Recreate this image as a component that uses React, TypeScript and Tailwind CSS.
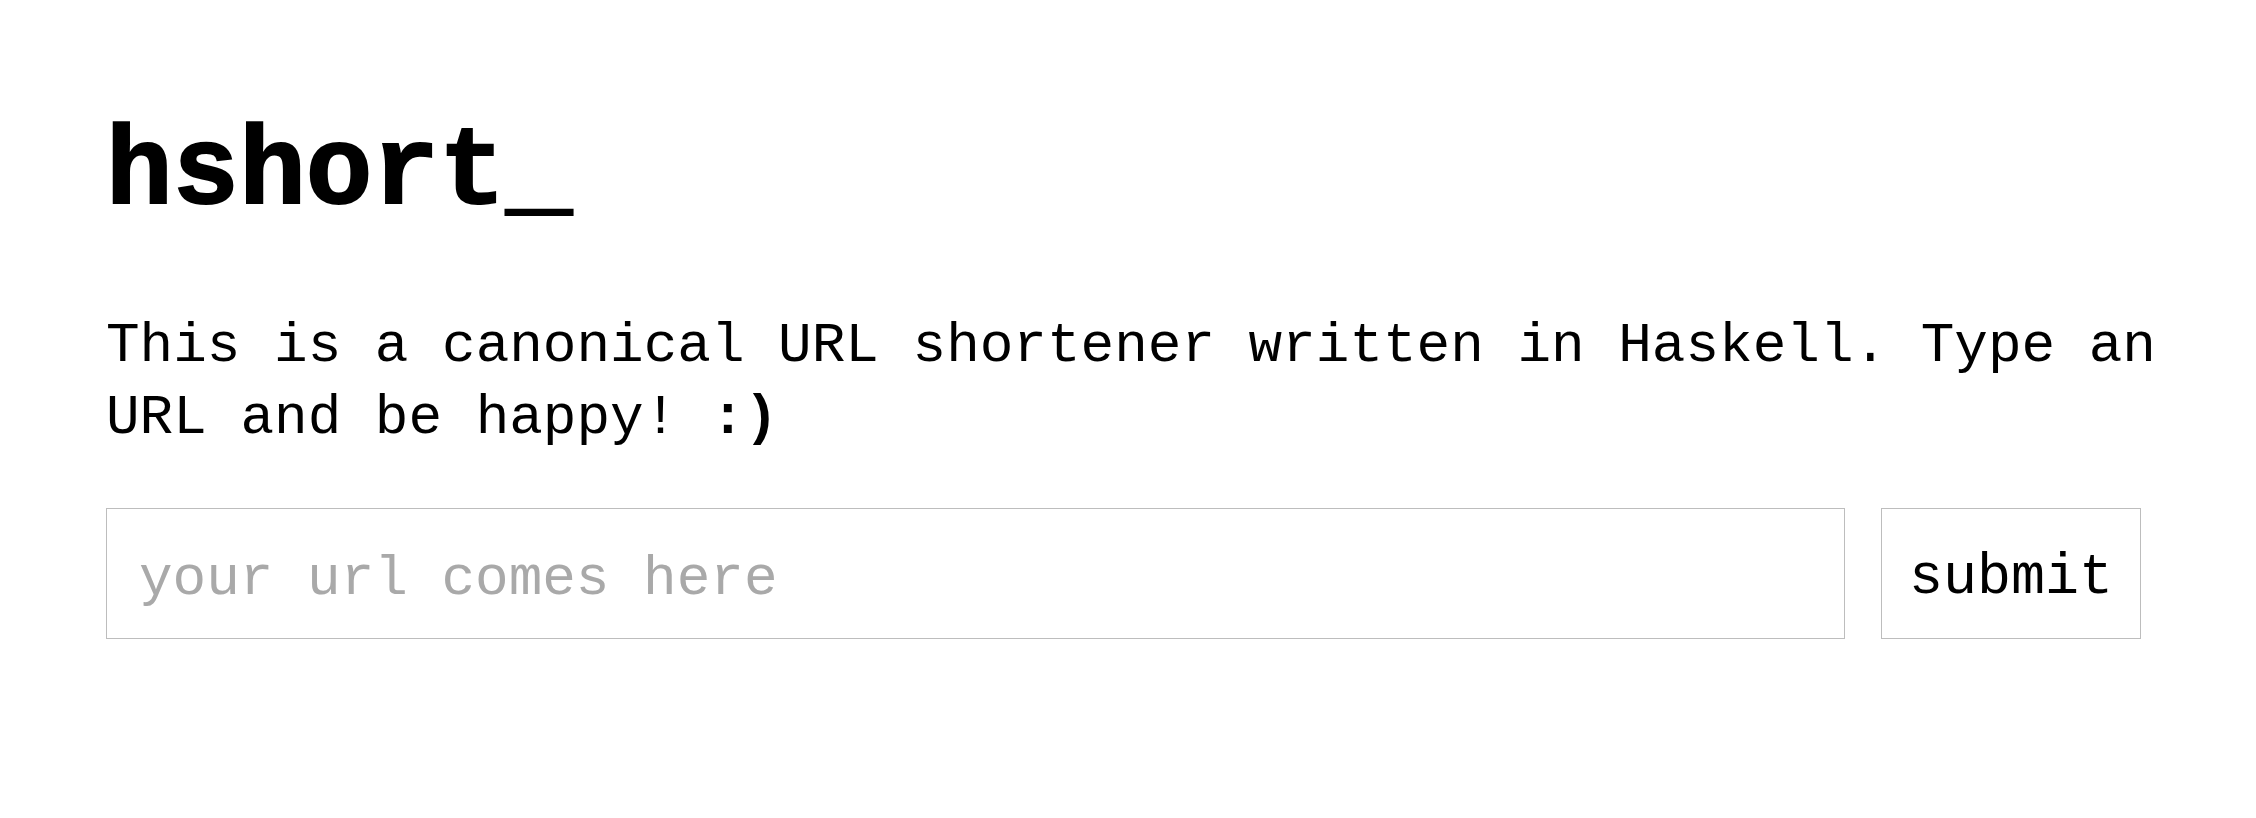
export default function App() {
  return (
    <main className="min-h-screen bg-white px-[106px] pt-[118px] text-black font-['Liberation_Mono','DejaVu_Sans_Mono',monospace]">
      {/* Title */}
      <h1 className="text-[111px] font-bold leading-none [-webkit-text-stroke:2px_black]">
        hshort_
      </h1>

      {/* Description */}
      <p className="mt-[81px] w-[2080px] text-[56px] leading-[72px]">
        This is a canonical URL shortener written in Haskell. Type an URL and be happy! <strong className="font-bold">:)</strong>
      </p>

      {/* Form */}
      <form className="mt-[54px] flex w-[2035px] gap-[36px]" onSubmit={(e) => e.preventDefault()}>
        <input
          type="text"
          placeholder="your url comes here"
          className="h-[131px] flex-1 border border-[#bdbdbd] bg-white pl-[32px] pt-[10px] text-[56px] outline-none placeholder:text-[#a9a9a9]"
        />
        <button
          type="submit"
          className="h-[131px] w-[260px] border border-[#bdbdbd] bg-white pt-[10px] text-[56.7px] text-black"
        >
          submit
        </button>
      </form>
    </main>
  );
}
